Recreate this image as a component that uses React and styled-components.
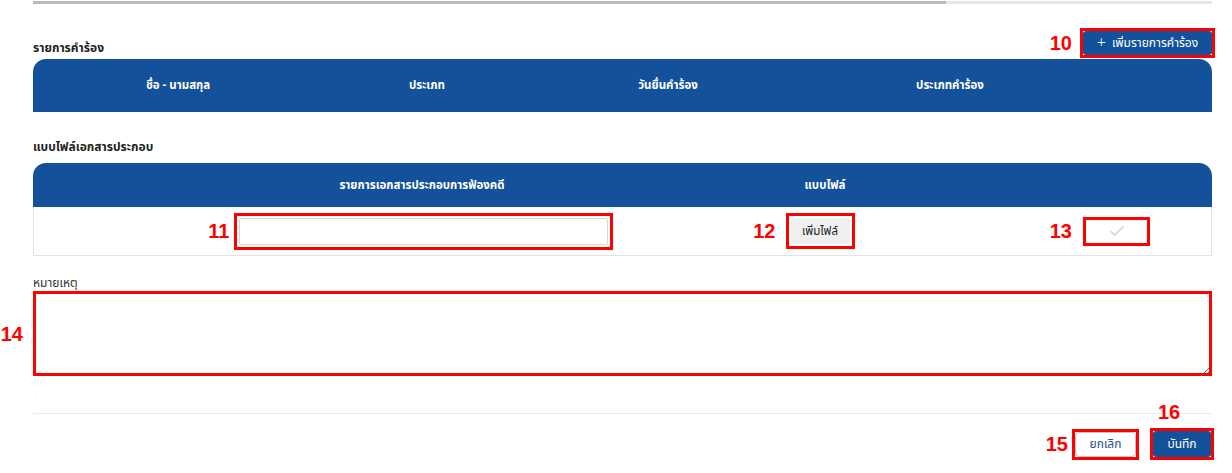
import React from "react";
import styled, { createGlobalStyle } from "styled-components";

const GlobalStyle = createGlobalStyle`
    body {
        margin: 0;
        background: #fff;
        font-family: "Noto Sans Thai", "Noto Sans", "Liberation Sans", sans-serif;
        color: #222;
    }
`;

const BLUE = "#13519a";

const Page = styled("div")`
    width: 1232px;
    height: 473px;
    box-sizing: border-box;
    padding: 1px 20px 0 33px;
    display: flex;
    flex-direction: column;
    overflow: hidden;
`;

const Progress = styled("div")`
    height: 3px;
    background: #e6e6e6;
    display: flex;
`;

const ProgressFill = styled("div")`
    background: #bababa;
`;

const SectionHead = styled("div")`
    display: flex;
    justify-content: space-between;
    align-items: flex-end;
    margin-top: 27px;
    margin-bottom: 4px;
`;

const Title = styled("div")`
    font-size: 12px;
    font-weight: 700;
    line-height: 16px;
    color: #222;
    margin-bottom: ${(p) => p.$mb || 0}px;
`;

const Label = styled("div")`
    font-size: 12px;
    line-height: 16px;
    color: #333;
`;

const TableHead = styled("div")`
    display: grid;
    grid-template-columns: ${(p) => p.$cols};
    height: ${(p) => p.$h}px;
    background: ${BLUE};
    border-radius: 13px 13px 0 0;
    color: #fff;
    font-size: 11.5px;
    font-weight: 700;
`;

const HeadCell = styled("div")`
    display: flex;
    align-items: center;
    justify-content: center;
    padding-left: ${(p) => p.$pl || 0}px;
    padding-right: ${(p) => p.$pr || 0}px;
`;

const TableRow = styled("div")`
    display: grid;
    grid-template-columns: ${(p) => p.$cols};
    height: 49px;
    box-sizing: border-box;
    border: 1px solid #e3e3e3;
    border-top: none;
`;

const Cell = styled("div")`
    display: flex;
    align-items: center;
    justify-content: ${(p) => p.$justify || "center"};
    padding-left: ${(p) => p.$pl || 0}px;
    padding-right: ${(p) => p.$pr || 0}px;
`;

const Callout = styled("span")`
    position: relative;
    display: inline-flex;
    outline: 3px solid #ff0000;
`;

const Num = styled("span")`
    position: absolute;
    font-family: "Liberation Sans", Arial, sans-serif;
    font-weight: 700;
    font-size: 20px;
    line-height: 20px;
    color: #ff0000;
    ${(p) =>
        p.$top
            ? `bottom: calc(100% + 9px); left: ${p.$left}px;`
            : `right: calc(100% + ${p.$gap}px); top: 50%; transform: translateY(-50%);`}
`;

const Section2 = styled("div")`
    margin-top: 27px;
`;

const PrimaryButton = styled("button")`
    display: flex;
    align-items: center;
    justify-content: center;
    gap: 6px;
    width: ${(p) => p.$w}px;
    height: ${(p) => p.$h}px;
    background: ${BLUE};
    color: #fff;
    border: none;
    border-radius: 3px;
    font-family: inherit;
    font-size: 12px;
    padding: 0;
`;

const Plus = styled("span")`
    font-size: 16px;
    line-height: 16px;
    font-weight: 300;
`;

const TextInput = styled("input")`
    width: 369px;
    height: 27px;
    box-sizing: border-box;
    border: 1px solid #d6d6d6;
    border-radius: 2px;
    margin: 2px;
`;

const FileButton = styled("button")`
    width: 59px;
    height: 26px;
    margin: 2px;
    background: #efefef;
    border: none;
    border-radius: 2px;
    font-family: inherit;
    font-size: 11.5px;
    color: #222;
    padding: 0;
`;

const CheckBox = styled("span")`
    display: flex;
    align-items: center;
    justify-content: center;
    width: 61px;
    height: 23px;
    background: #fff;
`;

const NoteLabel = styled(Label)`
    margin-top: 19px;
`;

const NoteWrap = styled("div")`
    position: relative;
    display: flex;
    outline: 3px solid #ff0000;
    outline-offset: -3px;
`;

const TextArea = styled("textarea")`
    flex: 1;
    height: 85px;
    box-sizing: border-box;
    border: 1px solid #ccc;
    border-radius: 2px;
    font-family: inherit;
`;

const Divider = styled("div")`
    height: 1px;
    background: #ececec;
    margin-top: 37px;
`;

const Footer = styled("div")`
    display: flex;
    justify-content: flex-end;
    align-items: center;
    gap: 17px;
    margin-top: 17px;
    padding-right: 1px;
`;

const CancelButton = styled("button")`
    width: 61px;
    height: 25px;
    background: #fff;
    color: #2d4f86;
    border: 1px solid #b7c3d4;
    border-radius: 4px;
    font-family: inherit;
    font-size: 12px;
    padding: 0;
`;

const HEAD1 = "290px 208px 274px 290px 1fr";
const HEAD2 = "740px 104px 1fr";

const Check = () => (
    <svg width="16" height="12" viewBox="0 0 16 12" fill="none">
        <path d="M1.5 6 L5.5 10 L14.5 1.5" stroke="#cfcfcf" strokeWidth="1.4" />
    </svg>
);

const App = () => {
    return (
        <Page>
            <GlobalStyle />
            <Progress>
                <ProgressFill style={{ width: "77.4%" }} />
            </Progress>

            <SectionHead>
                <Title $mb={-1}>รายการคำร้อง</Title>
                <Callout>
                    <Num $gap={11}>10</Num>
                    <PrimaryButton $w={129} $h={24}>
                        <Plus>+</Plus>เพิ่มรายการคำร้อง
                    </PrimaryButton>
                </Callout>
            </SectionHead>
            <TableHead $cols={HEAD1} $h={53}>
                <HeadCell>ชื่อ - นามสกุล</HeadCell>
                <HeadCell>ประเภท</HeadCell>
                <HeadCell>วันยื่นคำร้อง</HeadCell>
                <HeadCell>ประเภทคำร้อง</HeadCell>
                <HeadCell />
            </TableHead>

            <Section2>
                <Title $mb={8}>แบบไฟล์เอกสารประกอบ</Title>
                <TableHead $cols={HEAD2} $h={44}>
                    <HeadCell $pl={38}>รายการเอกสารประกอบการฟ้องคดี</HeadCell>
                    <HeadCell>แบบไฟล์</HeadCell>
                    <HeadCell />
                </TableHead>
                <TableRow $cols={HEAD2}>
                    <Cell $pl={38}>
                        <Callout>
                            <Num $gap={7}>11</Num>
                            <TextInput type="text" />
                        </Callout>
                    </Cell>
                    <Cell $pr={12}>
                        <Callout>
                            <Num $gap={13}>12</Num>
                            <FileButton>เพิ่มไฟล์</FileButton>
                        </Callout>
                    </Cell>
                    <Cell $justify="flex-start" $pl={208}>
                        <Callout>
                            <Num $gap={14}>13</Num>
                            <CheckBox>
                                <Check />
                            </CheckBox>
                        </Callout>
                    </Cell>
                </TableRow>
            </Section2>

            <NoteLabel>หมายเหตุ</NoteLabel>
            <NoteWrap>
                <Num $gap={10}>14</Num>
                <TextArea />
            </NoteWrap>

            <Divider />
            <Footer>
                <Callout>
                    <Num $gap={7}>15</Num>
                    <CancelButton>ยกเลิก</CancelButton>
                </Callout>
                <Callout>
                    <Num $top $left={5}>16</Num>
                    <PrimaryButton $w={58} $h={26}>บันทึก</PrimaryButton>
                </Callout>
            </Footer>
        </Page>
    );
};

export default App;
